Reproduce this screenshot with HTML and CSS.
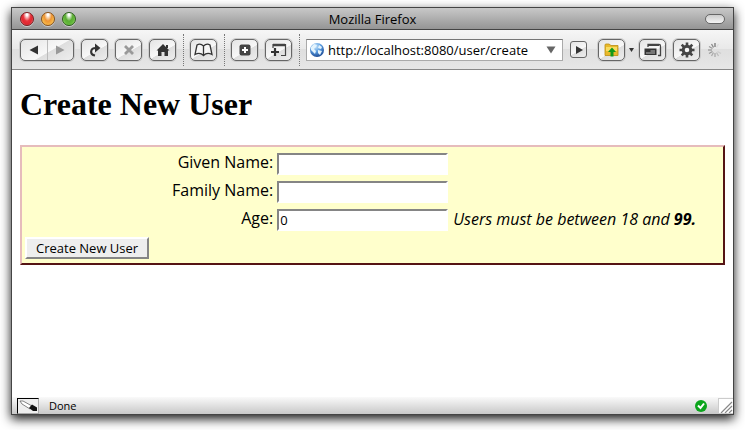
FILE: index.html
```
<!DOCTYPE html>
<html lang="en">
  <head>
    <meta charset="utf-8">
    <title>Create New User</title>
    <link rel="stylesheet" href="styles.css">
  </head>
  <body>
    <div class="window">
      <div class="titlebar">
        <div class="lights">
          <button class="light red" aria-label="Close"></button>
          <button class="light yellow" aria-label="Minimize"></button>
          <button class="light green" aria-label="Zoom"></button>
        </div>
        <span class="title">Mozilla Firefox</span>
        <button class="pill" aria-label="Toggle toolbar"></button>
      </div>

      <div class="toolbar">
        <div class="nav">
          <button aria-label="Back"><svg width="10" height="10"><path d="M9 0.500V9.500L0.500 5z" fill="#333"/></svg></button>
          <button aria-label="Forward"><svg width="10" height="10"><path d="M1 0.500V9.500L9.500 5z" fill="#999"/></svg></button>
        </div>
        <button class="tool" aria-label="Reload">
          <svg width="14" height="14"><path d="M7 12.500C1.500 11.500 2 5 8 5" fill="none" stroke="#333" stroke-width="2.200"/><path d="M7 0.500L12.500 5L7 9.500z" fill="#333"/></svg>
        </button>
        <button class="tool" aria-label="Stop">
          <svg width="12" height="12"><path d="M2 2L10 10M10 2L2 10" stroke="#999" stroke-width="2.800"/></svg>
        </button>
        <button class="tool" aria-label="Home">
          <svg width="14" height="14"><path d="M7 1L13.500 7.500H12V13H8.500V9H5.500V13H2V7.500H0.500z" fill="#333"/><path d="M10 2h2v3h-2z" fill="#333"/></svg>
        </button>
        <span class="dots"></span>
        <button class="tool" aria-label="Bookmarks">
          <svg width="19" height="14"><path d="M9.500 3C7 0.500 4.500 1 3 2L1 11.500C4 10 7 10 9.500 12.500C12 10 15 10 18 11.500L16 2C14.500 1 12 0.500 9.500 3zV12" fill="#f6f6f6" stroke="#333" stroke-width="1.300"/></svg>
        </button>
        <span class="dots"></span>
        <button class="tool" aria-label="Add">
          <svg width="12" height="12"><rect x="0.500" y="0.500" width="11" height="11" rx="2" fill="#444"/><path d="M6 3V9M3 6H9" stroke="#fff" stroke-width="2"/></svg>
        </button>
        <button class="tool" aria-label="New tab">
          <svg width="17" height="14"><path d="M3 5V1.500H15.500V12.500H11" fill="none" stroke="#444" stroke-width="1.200"/><path d="M3 2H15" stroke="#444" stroke-width="2.500"/><path d="M5 5V13M1 9H9" stroke="#333" stroke-width="2.200"/></svg>
        </button>
        <span class="dots"></span>
        <div class="urlbar">
          <svg width="16" height="16">
            <defs>
              <radialGradient id="sea" cx="40%" cy="25%" r="75%"><stop offset="0" stop-color="#c5e4fb"/><stop offset="0.500" stop-color="#5b9de0"/><stop offset="1" stop-color="#1d4c96"/></radialGradient>
            </defs>
            <circle cx="8" cy="8" r="7" fill="url(#sea)"/>
            <path d="M2 5L5 2L8 3L7 5L5 7L7 9L6 12L4 10L2 8zM10 3L13 5L12 7L9 6zM9 8L13 9L11 13L9 11z" fill="#e4f4fd"/>
          </svg>
          <input class="url" type="text" aria-label="Address" value="http://localhost:8080/user/create">
          <svg width="10" height="8"><path d="M0.500 0.500H9.500L5 7.500z" fill="#666"/></svg>
        </div>
        <button class="go" aria-label="Go"><svg width="8" height="8"><path d="M1 0L8 4L1 8z" fill="#333"/></svg></button>
        <button class="tool folder" aria-label="Parent folder">
          <svg width="15" height="14"><path d="M1 12.500V2Q1 1 2 1H5L7 2.500H14V12.500z" fill="#e9b92b" stroke="#b98d12" stroke-width="0.800"/><path d="M2 4H13V8H2z" fill="#f8dc60"/><path d="M8 4.500L12 9H9.500V13.500H6.500V9H4z" fill="#12991a"/></svg>
        </button>
        <button class="caret" aria-label="Folder menu"><svg width="5" height="4"><path d="M0 0H5L2.500 4z" fill="#333"/></svg></button>
        <button class="tool" aria-label="Windows">
          <svg width="18" height="14"><path d="M4 4V1.500H15Q16.500 1.500 16.500 3V12.500H14" fill="none" stroke="#444" stroke-width="1.300"/><path d="M4 2H15" stroke="#444" stroke-width="2"/><rect x="0.500" y="5.500" width="12" height="6.500" fill="#333"/><path d="M6.500 8H11M2 10H11" stroke="#bbb"/></svg>
        </button>
        <button class="tool" aria-label="Preferences">
          <svg width="16" height="16"><circle cx="8" cy="8" r="3.800" fill="none" stroke="#444" stroke-width="3"/><path d="M8 0.500V4M8 12V15.500M0.500 8H4M12 8H15.500M2.700 2.700L5 5M11 11L13.300 13.300M13.300 2.700L11 5M5 11L2.700 13.300" stroke="#444" stroke-width="2.600"/></svg>
        </button>
        <svg class="throbber" width="16" height="16" stroke-width="1.300">
          <path d="M8 1V5" stroke="#777"/><path d="M4.500 2L6.500 5.500" stroke="#888"/><path d="M2 4.500L5.500 6.500" stroke="#999"/><path d="M1 8H5" stroke="#999"/><path d="M2 11.500L5.500 9.500" stroke="#999"/><path d="M4.500 14L6.500 10.500" stroke="#aaa"/><path d="M8 15V11" stroke="#aaa"/><path d="M11.500 14L9.500 10.500" stroke="#bbb"/><path d="M14 11.500L10.500 9.500" stroke="#ccc"/><path d="M11.500 2L9.500 5.500" stroke="#ddd"/>
        </svg>
      </div>

      <div class="page">
        <h1>Create New User</h1>
        <form class="user-form">
          <div class="row">
            <label for="givenName">Given Name:</label>
            <input type="text" id="givenName">
          </div>
          <div class="row">
            <label for="familyName">Family Name:</label>
            <input type="text" id="familyName">
          </div>
          <div class="row">
            <label for="age">Age:</label>
            <input type="text" id="age" value="0">
            <em class="hint">Users must be between 18 and <b>99.</b></em>
          </div>
          <button type="button" class="submit">Create New User</button>
        </form>
      </div>

      <div class="statusbar">
        <span class="dropper">
          <svg width="20" height="14"><path d="M2 2L5 2L14 7L12 10L4 5z" fill="#fff" stroke="#666" stroke-width="0.800"/><path d="M11 9L14 5.500L19 8.500V12H15z" fill="#111"/></svg>
        </span>
        <span class="status">Done</span>
        <svg class="ok" width="12" height="12"><circle cx="6" cy="6" r="6" fill="#0ba51c"/><path d="M3 5.500L5.500 8L9 3.500" fill="none" stroke="#fff" stroke-width="2"/></svg>
        <span class="grip"><svg width="14" height="14"><path d="M2 14L13 3M6 14L13 7M10 14L13 11" stroke="#888" stroke-width="1.200"/></svg></span>
      </div>
    </div>
  </body>
</html>
```
FILE: styles.css
```
* {
  box-sizing: border-box;
}

body {
  display: flex;
  min-height: 100vh;
  margin: 0;
  padding: 7px 11px 15px;
  background: white;
  font-family: "Open Sans", sans-serif;
}

svg {
  display: block;
  flex: none;
}

button {
  display: flex;
  align-items: center;
  justify-content: center;
  padding: 0;
}

.window {
  display: flex;
  flex: 1;
  flex-direction: column;
  min-width: 0;
  border: 1px solid #444;
  background: white;
  box-shadow: 0 4px 10px rgba(0, 0, 0, 0.9);
}

/* title bar */

.titlebar {
  display: grid;
  grid-template-columns: 1fr auto 1fr;
  align-items: center;
  height: 22px;
  padding: 0 8px;
  border-bottom: 1px solid #444;
  background: linear-gradient(#c8c8c8, #959595);
}

.lights {
  display: flex;
  gap: 7px;
}

.light {
  width: 14px;
  height: 14px;
  border: 1px solid #555;
  border-radius: 50%;
  box-shadow: 0 1px 0 #ccc;
}

.red {
  background: radial-gradient(ellipse at 50% 10%, #fff 10%, #e8343c 45%, #e0262f 65%, #ff9a9a);
  border-color: #7a1c20;
}

.yellow {
  background: radial-gradient(ellipse at 50% 10%, #fff 10%, #ee9434 45%, #f4ad40 65%, #ffe680);
  border-color: #87511b;
}

.green {
  background: radial-gradient(ellipse at 50% 10%, #fff 10%, #5cad34 45%, #62b83a 65%, #c2f08a);
  border-color: #2c5c1c;
}

.title {
  font-size: 13px;
  line-height: 20px;
}

.pill {
  justify-self: end;
  width: 20px;
  height: 10px;
  border: 1px solid #666;
  border-radius: 5px;
  background: linear-gradient(#ccc, #f4f4f4);
}

/* toolbar */

.toolbar {
  display: flex;
  align-items: center;
  gap: 7px;
  height: 40px;
  padding: 0 10px 0 8px;
  border-bottom: 1px solid #888;
  background: linear-gradient(#f6f6f6, #e9e9e9 48%, #dfdfdf 50%, #e6e6e6);
}

.nav,
.tool,
.go {
  border: 1px solid #666;
  border-radius: 5px;
  background: linear-gradient(150deg, #e4e4e4, #f8f8f8 55%, #dedede 57%, #eee);
  box-shadow: 0 0 0 1px #ccc;
}

.nav {
  display: flex;
  width: 54px;
  height: 22px;
}

.nav button {
  flex: 1;
  border: 0;
  background: none;
}

.nav button + button {
  border-left: 1px solid #bbb;
}

.tool {
  flex: none;
  width: 27px;
  height: 22px;
}

.dots {
  height: 32px;
  margin-right: -1px;
  border-left: 1px dotted #777;
}

.urlbar {
  display: flex;
  flex: 1;
  align-items: center;
  min-width: 0;
  height: 22px;
  padding: 0 6px 0 2px;
  border: 1px solid #aaa;
  border-top-color: #777;
  background: white;
}

.url {
  flex: 1;
  min-width: 0;
  padding: 0 3px;
  border: 0;
  background: none;
  font: 13px "Open Sans", sans-serif;
}

.go {
  width: 17px;
  height: 17px;
  border-radius: 3px;
  box-shadow: none;
}

.folder {
  margin-left: 4px;
}

.caret {
  margin: 0 -2px 0 -3px;
  border: 0;
  background: none;
}

/* page */

.page {
  flex: 1;
  padding: 16px 8px;
}

h1 {
  margin: 0 0 22px;
  font: bold 32px/37px "Liberation Serif", serif;
}

.user-form {
  display: flex;
  flex-direction: column;
  gap: 6px;
  padding: 6px 3px 4px;
  border: 2px solid;
  border-color: #e6bcbc #551414 #551414 #e6bcbc;
  background: #ffc;
}

.row {
  display: grid;
  grid-template-columns: 36% 171px 1fr;
  gap: 2px;
  height: 22px;
}

.row label {
  padding-right: 2px;
  font-size: 16px;
  line-height: 18px;
  text-align: right;
}

.row input {
  height: 22px;
  padding: 1px;
  border: 2px solid;
  border-color: #858585 #fff #fff #858585;
  background: white;
  font: 13px "Open Sans", sans-serif;
}

.hint {
  padding-left: 3px;
  font-size: 16px;
  line-height: 20px;
}

.submit {
  align-self: flex-start;
  height: 22px;
  padding: 0 9px;
  border: 2px solid;
  border-color: #fff #858585 #858585 #fff;
  background: #eee;
  color: black;
  font: 13px "Open Sans", sans-serif;
}

/* status bar */

.statusbar {
  display: flex;
  align-items: center;
  height: 17px;
  padding-left: 5px;
  background: linear-gradient(#fafafa, #c8c8c8);
}

.dropper {
  border: 1px solid #aaa;
  border-top-color: #000;
  border-left-color: #000;
  background: #eee;
}

.status {
  flex: 1;
  margin-left: 10px;
  font-size: 11px;
  line-height: 16px;
}

.ok {
  margin-right: 11px;
}

.grip {
  border: 1px solid #ccc;
  border-width: 1px 0 0 1px;
  background: white;
}
```
